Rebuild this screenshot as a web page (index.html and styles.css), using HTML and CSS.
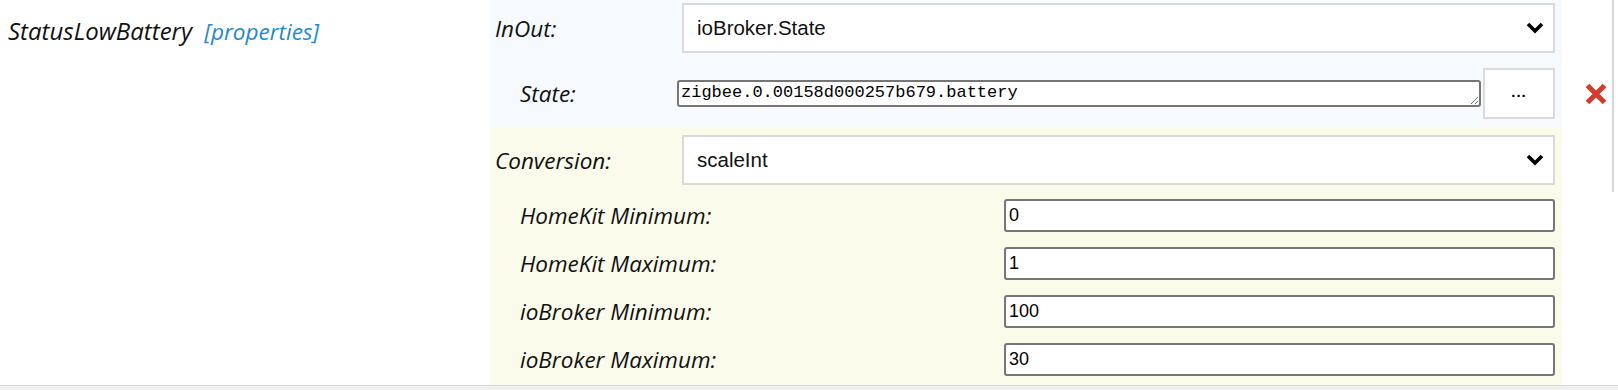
FILE: index.html
```html
<!DOCTYPE html>
<html lang="en">
<head>
  <meta charset="UTF-8">
  <title>StatusLowBattery</title>
  <link rel="stylesheet" href="styles.css">
</head>
<body>
  <div class="page">
    <div class="char-row">
      <div class="char-name">
        <span class="title">StatusLowBattery</span>
        <a class="props" href="#">[properties]</a>
      </div>

      <div class="panel">
        <div class="section inout">
          <div class="field">
            <label>InOut:</label>
            <div class="select">
              <span>ioBroker.State</span>
              <svg class="chevron" width="18" height="12" viewBox="0 0 18 12"><polyline points="2,2 9,9 16,2" fill="none" stroke="#000" stroke-width="3.6"/></svg>
            </div>
          </div>
          <div class="field sub state">
            <label>State:</label>
            <textarea class="state-input" rows="1">zigbee.0.00158d000257b679.battery</textarea>
            <button class="pick-btn">...</button>
          </div>
        </div>

        <div class="section conversion">
          <div class="field">
            <label>Conversion:</label>
            <div class="select">
              <span>scaleInt</span>
              <svg class="chevron" width="18" height="12" viewBox="0 0 18 12"><polyline points="2,2 9,9 16,2" fill="none" stroke="#000" stroke-width="3.6"/></svg>
            </div>
          </div>
          <div class="params">
            <div class="param">
              <label>HomeKit Minimum:</label>
              <input type="text" value="0">
            </div>
            <div class="param">
              <label>HomeKit Maximum:</label>
              <input type="text" value="1">
            </div>
            <div class="param">
              <label>ioBroker Minimum:</label>
              <input type="text" value="100">
            </div>
            <div class="param">
              <label>ioBroker Maximum:</label>
              <input type="text" value="30">
            </div>
          </div>
        </div>
      </div>

      <div class="actions">
        <svg class="remove" width="22" height="22" viewBox="0 0 22 22">
          <path d="M2.5 2.5 L19.5 19.5 M19.5 2.5 L2.5 19.5" stroke="#d63a2c" stroke-width="5" stroke-linecap="butt"/>
        </svg>
      </div>
      <div class="scroll-edge"></div>
    </div>
    <div class="footer"></div>
  </div>
</body>
</html>
```

FILE: styles.css
```css
/* Characteristic editor row */
body {
  margin: 0;
  background-color: #fff;
  font-family: "Open Sans", sans-serif;
}

.page {
  width: 1618px;
  height: 390px;
  overflow: hidden;
}

.char-row {
  display: flex;
  height: 385px;
}

.char-name {
  width: 482px;
  padding: 14px 0 0 8px;
  font-style: italic;
  font-size: 24px;
}

.title {
  color: #111;
}

.props {
  color: #2589cb;
  text-decoration: none;
  font-size: 22.5px;
  margin-left: 6px;
}

.panel {
  width: 1072px;
  display: flex;
  flex-direction: column;
}

.section {
  padding: 0 7px 0 5px;
}

.inout {
  background-color: #f6f9fd;
  padding-top: 3px;
  padding-bottom: 8px;
}

.conversion {
  background-color: #fafbeb;
  flex: 1;
  padding-top: 8px;
}

.field {
  display: flex;
  align-items: center;
}

.field label,
.param label {
  font-style: italic;
  font-size: 22.5px;
  color: #111;
}

.field label {
  width: 187px;
}

.select {
  flex: 1;
  height: 50px;
  box-sizing: border-box;
  border: 2px solid #dadada;
  background-color: #fff;
  display: flex;
  align-items: center;
  justify-content: space-between;
  padding: 0 9px 0 13px;
  font-family: "Liberation Sans", Arial, sans-serif;
  font-size: 20.5px;
  color: #111;
}

.state {
  margin-top: 15px;
  padding-left: 25px;
}

.state label {
  width: 157px;
}

.state-input {
  flex: 1;
  height: 27px;
  box-sizing: border-box;
  border: 2px solid #767676;
  border-radius: 3px;
  padding: 1px 2px;
  font-family: "Liberation Mono", "Courier New", monospace;
  font-size: 17px;
  line-height: 20px;
  resize: both;
  overflow: hidden;
  white-space: nowrap;
}

.pick-btn {
  width: 72px;
  height: 51px;
  margin-left: 2px;
  border: 2px solid #dadada;
  background-color: #fff;
  font-family: "Liberation Sans", Arial, sans-serif;
  font-weight: bold;
  font-size: 15px;
  letter-spacing: 1px;
  padding-bottom: 6px;
}

.conversion .field {
  margin-bottom: 14px;
}

.params {
  display: flex;
  flex-direction: column;
  gap: 15px;
  padding-left: 25px;
}

.param {
  display: flex;
  align-items: center;
  height: 33px;
}

.param label {
  width: 484px;
}

.param input {
  flex: 1;
  height: 33px;
  box-sizing: border-box;
  border: 2px solid #767676;
  border-radius: 3px;
  padding: 2px 3px;
  font-family: "Liberation Sans", Arial, sans-serif;
  font-size: 18px;
  color: #000;
}

.actions {
  width: 50px;
  display: flex;
  padding: 83px 0 0 23px;
  box-sizing: border-box;
}

.scroll-edge {
  width: 2px;
  height: 192px;
  background-color: #d6d6d6;
}

.footer {
  height: 5px;
  border-top: 1px solid #d8d8d8;
  background-color: #efefef;
}
```
